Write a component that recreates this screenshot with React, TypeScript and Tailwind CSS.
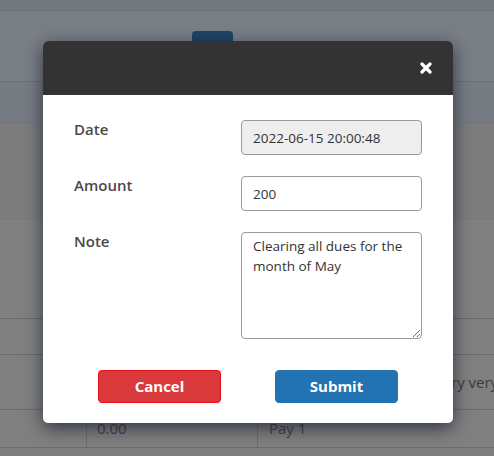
export default function App() {
    return (
        <div
            className="relative h-[456px] w-[494px] overflow-hidden bg-[#7f7f7f]"
            style={{ fontFamily: '"Open Sans", "Liberation Sans", sans-serif' }}
        >
            {/* page behind the overlay */}
            <div className="flex flex-col">
                <div className="h-[11px] border-b border-[#6c7178] bg-[#73787f]" />
                <div className="h-[71px] border-b border-[#6c7178] bg-[#7a7f86] pl-[168px] pt-[20px]">
                    <div className="flex items-end gap-[7px]">
                        <span className="text-[13px] leading-[20px] text-[#3a3d41]">Da</span>
                        <div className="h-[30px] w-[41px] rounded-[4px] bg-[#1d4466]" />
                    </div>
                </div>
                <div className="h-[41px] border-b border-[#73777d] bg-[#777c83]" />
                <div className="h-[97px] border-b border-[#7a7a7a] bg-[#7c7c7c]" />
                <div className="h-[99px] border-b border-[#6b6b6b] bg-[#808080]" />
                <div className="h-[36px] border-b border-[#6b6b6b] bg-[#808080]" />
                <div className="flex h-[55px] items-center border-b border-[#6b6b6b] bg-[#808080] pl-[451px]">
                    <span className="whitespace-nowrap text-[15px] text-[#3b3b3b]">ry very</span>
                </div>
                <div className="flex h-[38px] border-b border-[#6b6b6b] bg-[#808080]">
                    <div className="w-[87px] border-r border-[#6b6b6b]" />
                    <div className="flex w-[171px] items-center border-r border-[#6b6b6b] pl-[10px]">
                        <span className="text-[15px] text-[#404040]">0.00</span>
                    </div>
                    <div className="flex items-center pl-[11px]">
                        <span className="text-[15px] text-[#404040]">Pay 1</span>
                    </div>
                </div>
            </div>

            {/* modal */}
            <div className="absolute left-[43px] top-[41px] flex w-[410px] flex-col overflow-hidden rounded-[5px] bg-white shadow-[0_5px_18px_rgba(20,28,40,0.75)]">
                <div className="flex h-[54px] items-center justify-end bg-[#333333] pr-[21px]">
                    <svg width="12" height="12" viewBox="0 0 12 12" className="mt-[-1px]">
                        <path
                            d="M2 2 L10 10 M10 2 L2 10"
                            stroke="white"
                            strokeWidth="3.2"
                            strokeLinecap="round"
                        />
                    </svg>
                </div>

                <div className="flex flex-col px-[31px] pt-[25px] pb-[20px]">
                    <div className="grid grid-cols-[167px_181px] gap-y-[21px]">
                        <label className="pt-[1px] text-[15px] font-semibold leading-4 text-[#4a4a4a]">
                            Date
                        </label>
                        <input
                            readOnly
                            value="2022-06-15 20:00:48"
                            className="h-[35px] rounded-[4px] border border-[#9a9a9a] bg-[#eeeeee] px-[11px] text-[13.5px] text-[#333] outline-none"
                        />

                        <label className="pt-[1px] text-[15px] font-semibold leading-4 text-[#4a4a4a]">
                            Amount
                        </label>
                        <input
                            readOnly
                            value="200"
                            className="h-[35px] rounded-[4px] border border-[#9a9a9a] bg-white px-[11px] text-[13.5px] text-[#333] outline-none"
                        />

                        <label className="pt-[1px] text-[15px] font-semibold leading-4 text-[#4a4a4a]">
                            Note
                        </label>
                        <textarea
                            readOnly
                            value="Clearing all dues for the month of May"
                            className="h-[107px] resize-y rounded-[4px] border border-[#9a9a9a] bg-white px-[11px] py-[3px] text-[13.5px] leading-[20px] text-[#333] outline-none"
                        />
                    </div>

                    <div className="mt-[31px] flex justify-center gap-[54px]">
                        <button className="h-[33px] w-[123px] rounded-[4px] border border-[#e60f16] bg-[#d9393b] text-[15px] font-bold text-white">
                            Cancel
                        </button>
                        <button className="h-[33px] w-[123px] rounded-[4px] border border-[#2372b2] bg-[#2372b2] text-[15px] font-bold text-white">
                            Submit
                        </button>
                    </div>
                </div>
            </div>
        </div>
    );
}
